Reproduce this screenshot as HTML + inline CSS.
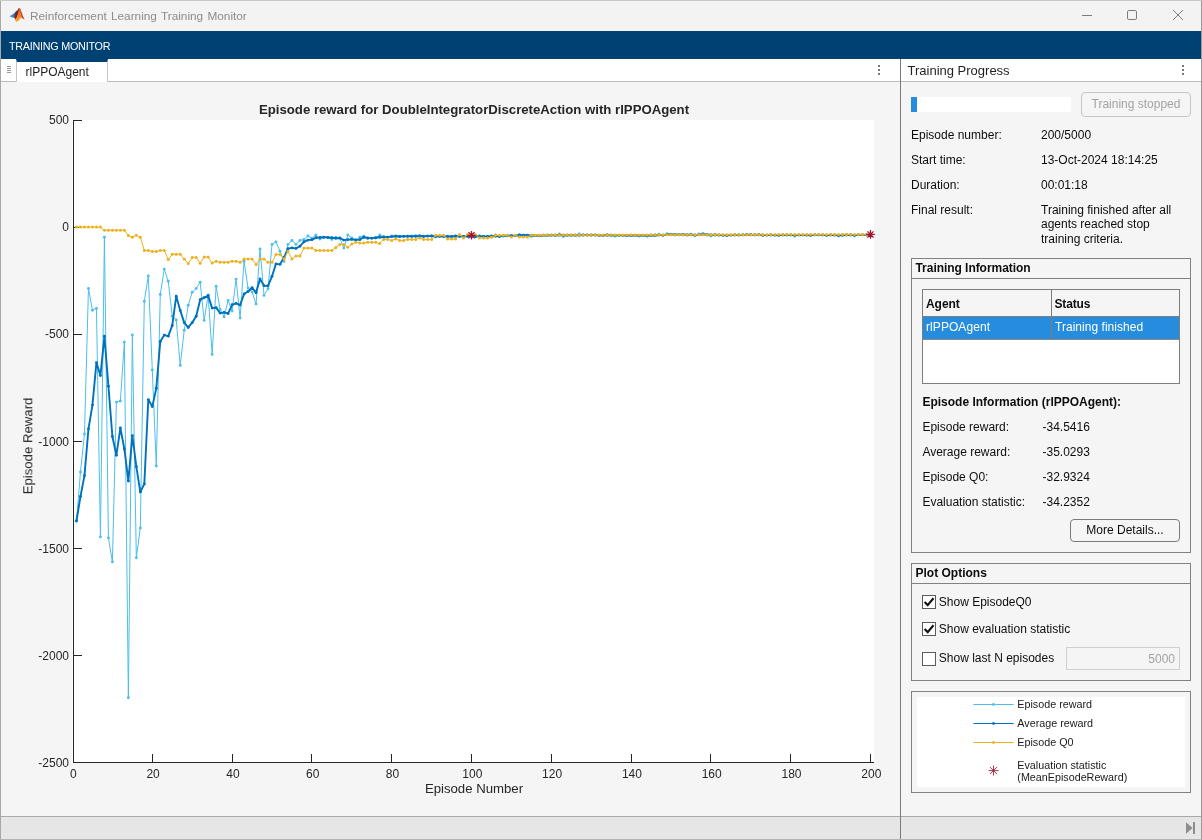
<!DOCTYPE html>
<html lang="en">
<head>
<meta charset="utf-8">
<title>Reinforcement Learning Training Monitor</title>
<style>
*{box-sizing:border-box;margin:0;padding:0}
html,body{width:1202px;height:840px;overflow:hidden;background:#f5f5f5}
body{position:relative;font-family:"Liberation Sans",Arial,sans-serif;font-size:12px;color:#0d0d0d}
.abs{position:absolute}
.t{position:absolute;white-space:nowrap;line-height:14px;height:14px}
#titlebar{left:0;top:0;width:1202px;height:31px;background:#f3f3f3}
#titletext{left:30px;top:8px;font-size:11.8px;word-spacing:1px;color:#8c8c8c;line-height:16px;height:16px}
#ribbon{left:1px;top:31px;width:1200px;height:28px;background:#004173}
#ribbontext{left:9px;top:39px;color:#fff;font-size:10.8px;line-height:14px;letter-spacing:-0.26px}
#tabrow{left:1px;top:59px;width:899px;height:23px;background:#fff;border-bottom:1px solid #bdbdbd}
#tab{left:16px;top:59px;width:92px;height:23px;background:#fff;border-left:1px solid #c4c4c4;border-right:1px solid #c4c4c4;border-top:3px solid #004173}
#rhead{left:901px;top:59px;width:300px;height:23px;background:#fff;border-bottom:1px solid #bdbdbd}
#vsep{left:900px;top:59px;width:1px;height:781px;background:#7a7a7a}
#lborder{left:0;top:1px;width:1px;height:839px;background:#a8a8a8}
#rborder{left:1201px;top:1px;width:1px;height:839px;background:#9b9b9b}
#tborder{left:0;top:0;width:1202px;height:1px;background:#c9c9c9}
#bborder{left:0;top:839px;width:1202px;height:1px;background:#b4b4b4}
.status{top:816px;height:23px;background:#e6e6e6;border-top:1px solid #a9a9a9}
.chart{position:absolute;left:0;top:82px}
.panel{position:absolute;left:911px;width:280px;border:1px solid #828282}
.panel .ph{position:absolute;left:0;top:0;width:278px;height:20px;border-bottom:1px solid #828282}
.b{font-weight:bold}
.btn{position:absolute;border:1px solid #7a7a7a;border-radius:4px;text-align:center}
.cb{position:absolute;left:922px;width:14px;height:14px;border:1px solid #5a5a5a;background:#fff}
.dots i{position:absolute;left:0;width:2px;height:2px;background:#4d4d4d;border-radius:1px}
</style>
</head>
<body>
<div id="root" style="position:absolute;left:0;top:0;width:1202px;height:840px;will-change:transform">
<div id="titlebar" class="abs"></div>
<div id="tborder" class="abs"></div>
<svg class="abs" style="left:9px;top:7px" width="16" height="16" viewBox="9 7 16 16">
  <defs>
    <linearGradient id="lgb" x1="0" y1="0" x2="1" y2="0"><stop offset="0" stop-color="#4ea8e6"/><stop offset="0.55" stop-color="#2f7fc8"/><stop offset="1" stop-color="#1c3f7a"/></linearGradient>
    <linearGradient id="lgm" x1="0" y1="1" x2="1" y2="0"><stop offset="0" stop-color="#9a2a1c"/><stop offset="1" stop-color="#5e1a22"/></linearGradient>
    <linearGradient id="lgo" x1="0" y1="0" x2="0" y2="1"><stop offset="0" stop-color="#d9541f"/><stop offset="0.6" stop-color="#ee8a2a"/><stop offset="1" stop-color="#f7b32b"/></linearGradient>
  </defs>
  <path d="M9.3 16.2L12.5 14.6L14.2 13.2L16.6 10.6L17.2 12L15.6 15.6L14.3 17.7L12.3 17.4Z" fill="url(#lgb)"/>
  <path d="M14.2 17.6L15 14.2L17 11L18.6 8.6L19.2 7.9L18.9 12L17.6 16L15.8 20Z" fill="url(#lgm)"/>
  <path d="M19.2 7.8C19.8 7.8 20.3 9 20.8 11L21.6 15L21.4 17.2L19.6 19.5L17.6 21.5L16.2 22L15.1 20.1L17 17L18.3 12Z" fill="url(#lgo)"/>
  <path d="M19.6 7.9C20.5 8.5 21.2 11 22 13.5C22.8 16 23.8 18.6 24.8 19.6C23.6 19.4 22.4 18.4 21.4 17.2C21.2 14 20.6 10.5 19.6 7.9Z" fill="#c7362b"/>
</svg>
<div id="titletext" class="t">Reinforcement Learning Training Monitor</div>
<svg class="abs" style="left:1070px;top:0" width="132" height="31" viewBox="0 0 132 31" fill="none" stroke="#7c7c7c" stroke-width="1">
  <path d="M12 15.5H22" />
  <rect x="57.5" y="10.5" width="9" height="9" rx="1.3"/>
  <path d="M103 10L113 20M113 10L103 20"/>
</svg>

<div id="ribbon" class="abs"></div>
<div id="ribbontext" class="t">TRAINING MONITOR</div>

<div id="tabrow" class="abs"></div>
<div id="tab" class="abs"></div>
<svg class="abs" style="left:6px;top:65px" width="7" height="9" viewBox="0 0 7 9" shape-rendering="crispEdges"><path d="M1 1.5H5M1 3.5H5M1 5.5H5M1 7.5H5" stroke="#959595" stroke-width="1"/></svg>
<div class="t" style="left:25.5px;top:65px;color:#1f1f1f">rlPPOAgent</div>
<div class="abs dots" style="left:878px;top:65px;width:2px;height:10px"><i style="top:0"></i><i style="top:4px"></i><i style="top:8px"></i></div>

<div id="rhead" class="abs"></div>
<div class="t" style="left:907.5px;top:63px;font-size:13px;line-height:15px;height:15px;color:#1f1f1f">Training Progress</div>
<div class="abs dots" style="left:1182px;top:65px;width:2px;height:10px"><i style="top:0"></i><i style="top:4px"></i><i style="top:8px"></i></div>

<svg class="chart" width="900" height="734" viewBox="0 82 900 734">
<rect x="72" y="120" width="802" height="643" fill="#fff"/>
<g stroke="#262626" stroke-width="1" fill="none" shape-rendering="crispEdges">
<path d="M73.5 120V763M73 762.5H874"/>
<path d="M74 120.5H81.5"/>
<path d="M74 227.5H81.5"/>
<path d="M74 334.5H81.5"/>
<path d="M74 441.5H81.5"/>
<path d="M74 548.5H81.5"/>
<path d="M74 655.5H81.5"/>
<path d="M74 762.5H81.5"/>
<path d="M73.5 762V754"/>
<path d="M152.5 762V754"/>
<path d="M232.5 762V754"/>
<path d="M311.5 762V754"/>
<path d="M391.5 762V754"/>
<path d="M471.5 762V754"/>
<path d="M551.5 762V754"/>
<path d="M631.5 762V754"/>
<path d="M710.5 762V754"/>
<path d="M790.5 762V754"/>
<path d="M870.5 762V754"/>
</g>
<polyline points="76.49,521.00 80.48,471.90 84.47,434.00 88.46,288.40 92.45,310.25 96.44,308.40 100.43,536.90 104.42,237.25 108.41,537.90 112.40,561.90 116.39,402.10 120.38,401.00 124.37,342.10 128.36,697.75 132.35,335.00 136.34,557.75 140.33,527.90 144.32,301.25 148.31,276.00 152.30,370.00 156.29,466.00 160.28,294.40 164.27,269.10 168.26,281.25 172.25,316.25 176.24,320.00 180.23,365.40 184.22,330.25 188.21,305.25 192.20,292.25 196.19,288.40 200.18,282.25 204.17,320.40 208.16,295.00 212.15,354.40 216.14,286.25 220.13,309.40 224.12,316.90 228.11,300.40 232.10,311.00 236.09,279.10 240.08,318.10 244.07,261.25 248.06,288.10 252.05,291.90 256.04,304.10 260.03,249.00 264.02,295.40 268.01,288.75 272.00,244.40 275.99,241.90 279.98,251.25 283.97,261.50 287.96,244.40 291.95,240.40 295.94,244.40 299.93,240.40 303.92,239.40 307.91,236.00 311.90,238.10 315.89,235.00 319.88,239.10 323.87,237.50 327.86,237.50 331.85,239.40 335.84,237.50 339.83,238.10 343.82,248.10 347.81,235.00 351.80,238.00 355.79,240.00 359.78,237.25 363.77,236.25 367.76,238.50 371.75,238.50 375.74,238.00 379.73,235.00 383.72,236.50 387.71,237.50 391.70,236.00 395.69,235.93 399.68,236.36 403.67,236.12 407.66,236.45 411.65,236.48 415.64,235.69 419.63,235.62 423.62,236.77 427.61,235.96 431.60,235.93 435.59,236.99 439.58,236.26 443.57,236.77 447.56,236.27 451.55,236.49 455.54,235.81 459.53,236.49 463.52,236.82 467.51,236.33 471.50,236.64 475.49,236.54 479.48,235.69 483.47,236.66 487.46,236.43 491.45,236.02 495.44,235.07 499.43,236.85 503.42,235.37 507.41,235.53 511.40,235.64 515.39,235.51 519.38,234.45 523.37,235.27 527.36,235.55 531.35,236.49 535.34,235.63 539.33,235.58 543.32,235.03 547.31,235.05 551.30,235.10 555.29,235.61 559.28,234.04 563.27,236.56 567.26,235.13 571.25,235.26 575.24,235.17 579.23,233.94 583.22,235.30 587.21,235.29 591.20,235.50 595.19,235.34 599.18,235.51 603.17,235.45 607.16,234.34 611.15,235.30 615.14,236.14 619.13,235.42 623.12,235.49 627.11,235.44 631.10,235.20 635.09,235.29 639.08,236.13 643.07,235.36 647.06,236.37 651.05,234.96 655.04,234.80 659.03,234.14 663.02,235.43 667.01,233.59 671.00,234.08 674.99,235.00 678.98,234.81 682.97,234.91 686.96,235.23 690.95,234.10 694.94,235.91 698.93,233.90 702.92,233.49 706.91,235.16 710.90,236.08 714.89,235.26 718.88,235.32 722.87,234.98 726.86,235.32 730.85,234.83 734.84,234.66 738.83,235.02 742.82,234.61 746.81,234.72 750.80,234.86 754.79,234.99 758.78,234.67 762.77,235.78 766.76,235.15 770.75,234.76 774.74,235.20 778.73,235.15 782.72,234.78 786.71,234.83 790.70,234.86 794.69,236.14 798.68,234.90 802.67,234.87 806.66,234.90 810.65,235.12 814.64,234.81 818.63,234.75 822.62,234.94 826.61,235.80 830.60,234.64 834.59,235.10 838.58,235.97 842.57,234.79 846.56,234.40 850.55,234.68 854.54,235.99 858.53,234.39 862.52,234.80 866.51,234.80 870.50,234.39" fill="none" stroke="#4DBEEE" stroke-width="1" stroke-linejoin="round"/>
<g fill="#4DBEEE"><circle cx="76.49" cy="521.00" r="1.45"/><circle cx="80.48" cy="471.90" r="1.45"/><circle cx="84.47" cy="434.00" r="1.45"/><circle cx="88.46" cy="288.40" r="1.45"/><circle cx="92.45" cy="310.25" r="1.45"/><circle cx="96.44" cy="308.40" r="1.45"/><circle cx="100.43" cy="536.90" r="1.45"/><circle cx="104.42" cy="237.25" r="1.45"/><circle cx="108.41" cy="537.90" r="1.45"/><circle cx="112.40" cy="561.90" r="1.45"/><circle cx="116.39" cy="402.10" r="1.45"/><circle cx="120.38" cy="401.00" r="1.45"/><circle cx="124.37" cy="342.10" r="1.45"/><circle cx="128.36" cy="697.75" r="1.45"/><circle cx="132.35" cy="335.00" r="1.45"/><circle cx="136.34" cy="557.75" r="1.45"/><circle cx="140.33" cy="527.90" r="1.45"/><circle cx="144.32" cy="301.25" r="1.45"/><circle cx="148.31" cy="276.00" r="1.45"/><circle cx="152.30" cy="370.00" r="1.45"/><circle cx="156.29" cy="466.00" r="1.45"/><circle cx="160.28" cy="294.40" r="1.45"/><circle cx="164.27" cy="269.10" r="1.45"/><circle cx="168.26" cy="281.25" r="1.45"/><circle cx="172.25" cy="316.25" r="1.45"/><circle cx="176.24" cy="320.00" r="1.45"/><circle cx="180.23" cy="365.40" r="1.45"/><circle cx="184.22" cy="330.25" r="1.45"/><circle cx="188.21" cy="305.25" r="1.45"/><circle cx="192.20" cy="292.25" r="1.45"/><circle cx="196.19" cy="288.40" r="1.45"/><circle cx="200.18" cy="282.25" r="1.45"/><circle cx="204.17" cy="320.40" r="1.45"/><circle cx="208.16" cy="295.00" r="1.45"/><circle cx="212.15" cy="354.40" r="1.45"/><circle cx="216.14" cy="286.25" r="1.45"/><circle cx="220.13" cy="309.40" r="1.45"/><circle cx="224.12" cy="316.90" r="1.45"/><circle cx="228.11" cy="300.40" r="1.45"/><circle cx="232.10" cy="311.00" r="1.45"/><circle cx="236.09" cy="279.10" r="1.45"/><circle cx="240.08" cy="318.10" r="1.45"/><circle cx="244.07" cy="261.25" r="1.45"/><circle cx="248.06" cy="288.10" r="1.45"/><circle cx="252.05" cy="291.90" r="1.45"/><circle cx="256.04" cy="304.10" r="1.45"/><circle cx="260.03" cy="249.00" r="1.45"/><circle cx="264.02" cy="295.40" r="1.45"/><circle cx="268.01" cy="288.75" r="1.45"/><circle cx="272.00" cy="244.40" r="1.45"/><circle cx="275.99" cy="241.90" r="1.45"/><circle cx="279.98" cy="251.25" r="1.45"/><circle cx="283.97" cy="261.50" r="1.45"/><circle cx="287.96" cy="244.40" r="1.45"/><circle cx="291.95" cy="240.40" r="1.45"/><circle cx="295.94" cy="244.40" r="1.45"/><circle cx="299.93" cy="240.40" r="1.45"/><circle cx="303.92" cy="239.40" r="1.45"/><circle cx="307.91" cy="236.00" r="1.45"/><circle cx="311.90" cy="238.10" r="1.45"/><circle cx="315.89" cy="235.00" r="1.45"/><circle cx="319.88" cy="239.10" r="1.45"/><circle cx="323.87" cy="237.50" r="1.45"/><circle cx="327.86" cy="237.50" r="1.45"/><circle cx="331.85" cy="239.40" r="1.45"/><circle cx="335.84" cy="237.50" r="1.45"/><circle cx="339.83" cy="238.10" r="1.45"/><circle cx="343.82" cy="248.10" r="1.45"/><circle cx="347.81" cy="235.00" r="1.45"/><circle cx="351.80" cy="238.00" r="1.45"/><circle cx="355.79" cy="240.00" r="1.45"/><circle cx="359.78" cy="237.25" r="1.45"/><circle cx="363.77" cy="236.25" r="1.45"/><circle cx="367.76" cy="238.50" r="1.45"/><circle cx="371.75" cy="238.50" r="1.45"/><circle cx="375.74" cy="238.00" r="1.45"/><circle cx="379.73" cy="235.00" r="1.45"/><circle cx="383.72" cy="236.50" r="1.45"/><circle cx="387.71" cy="237.50" r="1.45"/><circle cx="391.70" cy="236.00" r="1.45"/><circle cx="395.69" cy="235.93" r="1.45"/><circle cx="399.68" cy="236.36" r="1.45"/><circle cx="403.67" cy="236.12" r="1.45"/><circle cx="407.66" cy="236.45" r="1.45"/><circle cx="411.65" cy="236.48" r="1.45"/><circle cx="415.64" cy="235.69" r="1.45"/><circle cx="419.63" cy="235.62" r="1.45"/><circle cx="423.62" cy="236.77" r="1.45"/><circle cx="427.61" cy="235.96" r="1.45"/><circle cx="431.60" cy="235.93" r="1.45"/><circle cx="435.59" cy="236.99" r="1.45"/><circle cx="439.58" cy="236.26" r="1.45"/><circle cx="443.57" cy="236.77" r="1.45"/><circle cx="447.56" cy="236.27" r="1.45"/><circle cx="451.55" cy="236.49" r="1.45"/><circle cx="455.54" cy="235.81" r="1.45"/><circle cx="459.53" cy="236.49" r="1.45"/><circle cx="463.52" cy="236.82" r="1.45"/><circle cx="467.51" cy="236.33" r="1.45"/><circle cx="471.50" cy="236.64" r="1.45"/><circle cx="475.49" cy="236.54" r="1.45"/><circle cx="479.48" cy="235.69" r="1.45"/><circle cx="483.47" cy="236.66" r="1.45"/><circle cx="487.46" cy="236.43" r="1.45"/><circle cx="491.45" cy="236.02" r="1.45"/><circle cx="495.44" cy="235.07" r="1.45"/><circle cx="499.43" cy="236.85" r="1.45"/><circle cx="503.42" cy="235.37" r="1.45"/><circle cx="507.41" cy="235.53" r="1.45"/><circle cx="511.40" cy="235.64" r="1.45"/><circle cx="515.39" cy="235.51" r="1.45"/><circle cx="519.38" cy="234.45" r="1.45"/><circle cx="523.37" cy="235.27" r="1.45"/><circle cx="527.36" cy="235.55" r="1.45"/><circle cx="531.35" cy="236.49" r="1.45"/><circle cx="535.34" cy="235.63" r="1.45"/><circle cx="539.33" cy="235.58" r="1.45"/><circle cx="543.32" cy="235.03" r="1.45"/><circle cx="547.31" cy="235.05" r="1.45"/><circle cx="551.30" cy="235.10" r="1.45"/><circle cx="555.29" cy="235.61" r="1.45"/><circle cx="559.28" cy="234.04" r="1.45"/><circle cx="563.27" cy="236.56" r="1.45"/><circle cx="567.26" cy="235.13" r="1.45"/><circle cx="571.25" cy="235.26" r="1.45"/><circle cx="575.24" cy="235.17" r="1.45"/><circle cx="579.23" cy="233.94" r="1.45"/><circle cx="583.22" cy="235.30" r="1.45"/><circle cx="587.21" cy="235.29" r="1.45"/><circle cx="591.20" cy="235.50" r="1.45"/><circle cx="595.19" cy="235.34" r="1.45"/><circle cx="599.18" cy="235.51" r="1.45"/><circle cx="603.17" cy="235.45" r="1.45"/><circle cx="607.16" cy="234.34" r="1.45"/><circle cx="611.15" cy="235.30" r="1.45"/><circle cx="615.14" cy="236.14" r="1.45"/><circle cx="619.13" cy="235.42" r="1.45"/><circle cx="623.12" cy="235.49" r="1.45"/><circle cx="627.11" cy="235.44" r="1.45"/><circle cx="631.10" cy="235.20" r="1.45"/><circle cx="635.09" cy="235.29" r="1.45"/><circle cx="639.08" cy="236.13" r="1.45"/><circle cx="643.07" cy="235.36" r="1.45"/><circle cx="647.06" cy="236.37" r="1.45"/><circle cx="651.05" cy="234.96" r="1.45"/><circle cx="655.04" cy="234.80" r="1.45"/><circle cx="659.03" cy="234.14" r="1.45"/><circle cx="663.02" cy="235.43" r="1.45"/><circle cx="667.01" cy="233.59" r="1.45"/><circle cx="671.00" cy="234.08" r="1.45"/><circle cx="674.99" cy="235.00" r="1.45"/><circle cx="678.98" cy="234.81" r="1.45"/><circle cx="682.97" cy="234.91" r="1.45"/><circle cx="686.96" cy="235.23" r="1.45"/><circle cx="690.95" cy="234.10" r="1.45"/><circle cx="694.94" cy="235.91" r="1.45"/><circle cx="698.93" cy="233.90" r="1.45"/><circle cx="702.92" cy="233.49" r="1.45"/><circle cx="706.91" cy="235.16" r="1.45"/><circle cx="710.90" cy="236.08" r="1.45"/><circle cx="714.89" cy="235.26" r="1.45"/><circle cx="718.88" cy="235.32" r="1.45"/><circle cx="722.87" cy="234.98" r="1.45"/><circle cx="726.86" cy="235.32" r="1.45"/><circle cx="730.85" cy="234.83" r="1.45"/><circle cx="734.84" cy="234.66" r="1.45"/><circle cx="738.83" cy="235.02" r="1.45"/><circle cx="742.82" cy="234.61" r="1.45"/><circle cx="746.81" cy="234.72" r="1.45"/><circle cx="750.80" cy="234.86" r="1.45"/><circle cx="754.79" cy="234.99" r="1.45"/><circle cx="758.78" cy="234.67" r="1.45"/><circle cx="762.77" cy="235.78" r="1.45"/><circle cx="766.76" cy="235.15" r="1.45"/><circle cx="770.75" cy="234.76" r="1.45"/><circle cx="774.74" cy="235.20" r="1.45"/><circle cx="778.73" cy="235.15" r="1.45"/><circle cx="782.72" cy="234.78" r="1.45"/><circle cx="786.71" cy="234.83" r="1.45"/><circle cx="790.70" cy="234.86" r="1.45"/><circle cx="794.69" cy="236.14" r="1.45"/><circle cx="798.68" cy="234.90" r="1.45"/><circle cx="802.67" cy="234.87" r="1.45"/><circle cx="806.66" cy="234.90" r="1.45"/><circle cx="810.65" cy="235.12" r="1.45"/><circle cx="814.64" cy="234.81" r="1.45"/><circle cx="818.63" cy="234.75" r="1.45"/><circle cx="822.62" cy="234.94" r="1.45"/><circle cx="826.61" cy="235.80" r="1.45"/><circle cx="830.60" cy="234.64" r="1.45"/><circle cx="834.59" cy="235.10" r="1.45"/><circle cx="838.58" cy="235.97" r="1.45"/><circle cx="842.57" cy="234.79" r="1.45"/><circle cx="846.56" cy="234.40" r="1.45"/><circle cx="850.55" cy="234.68" r="1.45"/><circle cx="854.54" cy="235.99" r="1.45"/><circle cx="858.53" cy="234.39" r="1.45"/><circle cx="862.52" cy="234.80" r="1.45"/><circle cx="866.51" cy="234.80" r="1.45"/><circle cx="870.50" cy="234.39" r="1.45"/></g>

<polyline points="76.49,521.00 80.48,496.45 84.47,475.63 88.46,428.83 92.45,405.11 96.44,362.59 100.43,375.59 104.42,336.24 108.41,386.14 112.40,436.47 116.39,455.21 120.38,428.03 124.37,449.00 128.36,480.97 132.35,435.59 136.34,466.72 140.33,492.10 144.32,483.93 148.31,399.58 152.30,406.58 156.29,388.23 160.28,341.53 164.27,335.10 168.26,336.15 172.25,325.40 176.24,296.20 180.23,310.40 184.22,322.63 188.21,327.43 192.20,322.63 196.19,316.31 200.18,299.68 204.17,297.71 208.16,295.66 212.15,308.09 216.14,307.66 220.13,313.09 224.12,312.39 228.11,313.47 232.10,304.79 236.09,303.36 240.08,305.10 244.07,293.97 248.06,291.51 252.05,287.69 256.04,292.69 260.03,278.87 264.02,285.70 268.01,285.83 272.00,276.33 275.99,263.89 279.98,264.34 283.97,257.56 287.96,248.69 291.95,247.89 295.94,248.39 299.93,246.22 303.92,241.80 307.91,240.12 311.90,239.66 315.89,237.78 319.88,237.52 323.87,237.14 327.86,237.44 331.85,237.70 335.84,238.20 339.83,238.00 343.82,240.12 347.81,239.62 351.80,239.34 355.79,239.84 359.78,239.67 363.77,237.30 367.76,238.00 371.75,238.10 375.74,237.70 379.73,237.25 383.72,237.30 387.71,237.10 391.70,236.60 395.69,236.19 399.68,236.46 403.67,236.38 407.66,236.17 411.65,236.27 415.64,236.22 419.63,236.07 423.62,236.20 427.61,236.10 431.60,235.99 435.59,236.26 439.58,236.38 443.57,236.38 447.56,236.44 451.55,236.56 455.54,236.32 459.53,236.37 463.52,236.38 467.51,236.39 471.50,236.42 475.49,236.56 479.48,236.40 483.47,236.37 487.46,236.39 491.45,236.27 495.44,235.97 499.43,236.21 503.42,235.95 507.41,235.77 511.40,235.69 515.39,235.78 519.38,235.30 523.37,235.28 527.36,235.28 531.35,235.46 535.34,235.48 539.33,235.71 543.32,235.66 547.31,235.56 551.30,235.28 555.29,235.27 559.28,234.97 563.27,235.27 567.26,235.29 571.25,235.32 575.24,235.23 579.23,235.21 583.22,234.96 587.21,234.99 591.20,235.04 595.19,235.07 599.18,235.39 603.17,235.42 607.16,235.23 611.15,235.19 615.14,235.35 619.13,235.33 623.12,235.34 627.11,235.56 631.10,235.54 635.09,235.37 639.08,235.51 643.07,235.48 647.06,235.67 651.05,235.62 655.04,235.52 659.03,235.12 663.02,235.14 667.01,234.58 671.00,234.41 674.99,234.45 678.98,234.58 682.97,234.48 686.96,234.81 690.95,234.81 694.94,234.99 698.93,234.81 702.92,234.53 706.91,234.51 710.90,234.91 714.89,234.78 718.88,235.06 722.87,235.36 726.86,235.39 730.85,235.14 734.84,235.02 738.83,234.96 742.82,234.89 746.81,234.77 750.80,234.77 754.79,234.84 758.78,234.77 762.77,235.00 766.76,235.09 770.75,235.07 774.74,235.11 778.73,235.21 782.72,235.01 786.71,234.94 790.70,234.96 794.69,235.15 798.68,235.10 802.67,235.12 806.66,235.14 810.65,235.19 814.64,234.92 818.63,234.89 822.62,234.90 826.61,235.08 830.60,234.99 834.59,235.05 838.58,235.29 842.57,235.26 846.56,234.98 850.55,234.99 854.54,235.17 858.53,234.85 862.52,234.85 866.51,234.93 870.50,234.87" fill="none" stroke="#0072BD" stroke-width="1.9" stroke-linejoin="round"/>
<g fill="#0072BD"><circle cx="76.49" cy="521.00" r="1.45"/><circle cx="80.48" cy="496.45" r="1.45"/><circle cx="84.47" cy="475.63" r="1.45"/><circle cx="88.46" cy="428.83" r="1.45"/><circle cx="92.45" cy="405.11" r="1.45"/><circle cx="96.44" cy="362.59" r="1.45"/><circle cx="100.43" cy="375.59" r="1.45"/><circle cx="104.42" cy="336.24" r="1.45"/><circle cx="108.41" cy="386.14" r="1.45"/><circle cx="112.40" cy="436.47" r="1.45"/><circle cx="116.39" cy="455.21" r="1.45"/><circle cx="120.38" cy="428.03" r="1.45"/><circle cx="124.37" cy="449.00" r="1.45"/><circle cx="128.36" cy="480.97" r="1.45"/><circle cx="132.35" cy="435.59" r="1.45"/><circle cx="136.34" cy="466.72" r="1.45"/><circle cx="140.33" cy="492.10" r="1.45"/><circle cx="144.32" cy="483.93" r="1.45"/><circle cx="148.31" cy="399.58" r="1.45"/><circle cx="152.30" cy="406.58" r="1.45"/><circle cx="156.29" cy="388.23" r="1.45"/><circle cx="160.28" cy="341.53" r="1.45"/><circle cx="164.27" cy="335.10" r="1.45"/><circle cx="168.26" cy="336.15" r="1.45"/><circle cx="172.25" cy="325.40" r="1.45"/><circle cx="176.24" cy="296.20" r="1.45"/><circle cx="180.23" cy="310.40" r="1.45"/><circle cx="184.22" cy="322.63" r="1.45"/><circle cx="188.21" cy="327.43" r="1.45"/><circle cx="192.20" cy="322.63" r="1.45"/><circle cx="196.19" cy="316.31" r="1.45"/><circle cx="200.18" cy="299.68" r="1.45"/><circle cx="204.17" cy="297.71" r="1.45"/><circle cx="208.16" cy="295.66" r="1.45"/><circle cx="212.15" cy="308.09" r="1.45"/><circle cx="216.14" cy="307.66" r="1.45"/><circle cx="220.13" cy="313.09" r="1.45"/><circle cx="224.12" cy="312.39" r="1.45"/><circle cx="228.11" cy="313.47" r="1.45"/><circle cx="232.10" cy="304.79" r="1.45"/><circle cx="236.09" cy="303.36" r="1.45"/><circle cx="240.08" cy="305.10" r="1.45"/><circle cx="244.07" cy="293.97" r="1.45"/><circle cx="248.06" cy="291.51" r="1.45"/><circle cx="252.05" cy="287.69" r="1.45"/><circle cx="256.04" cy="292.69" r="1.45"/><circle cx="260.03" cy="278.87" r="1.45"/><circle cx="264.02" cy="285.70" r="1.45"/><circle cx="268.01" cy="285.83" r="1.45"/><circle cx="272.00" cy="276.33" r="1.45"/><circle cx="275.99" cy="263.89" r="1.45"/><circle cx="279.98" cy="264.34" r="1.45"/><circle cx="283.97" cy="257.56" r="1.45"/><circle cx="287.96" cy="248.69" r="1.45"/><circle cx="291.95" cy="247.89" r="1.45"/><circle cx="295.94" cy="248.39" r="1.45"/><circle cx="299.93" cy="246.22" r="1.45"/><circle cx="303.92" cy="241.80" r="1.45"/><circle cx="307.91" cy="240.12" r="1.45"/><circle cx="311.90" cy="239.66" r="1.45"/><circle cx="315.89" cy="237.78" r="1.45"/><circle cx="319.88" cy="237.52" r="1.45"/><circle cx="323.87" cy="237.14" r="1.45"/><circle cx="327.86" cy="237.44" r="1.45"/><circle cx="331.85" cy="237.70" r="1.45"/><circle cx="335.84" cy="238.20" r="1.45"/><circle cx="339.83" cy="238.00" r="1.45"/><circle cx="343.82" cy="240.12" r="1.45"/><circle cx="347.81" cy="239.62" r="1.45"/><circle cx="351.80" cy="239.34" r="1.45"/><circle cx="355.79" cy="239.84" r="1.45"/><circle cx="359.78" cy="239.67" r="1.45"/><circle cx="363.77" cy="237.30" r="1.45"/><circle cx="367.76" cy="238.00" r="1.45"/><circle cx="371.75" cy="238.10" r="1.45"/><circle cx="375.74" cy="237.70" r="1.45"/><circle cx="379.73" cy="237.25" r="1.45"/><circle cx="383.72" cy="237.30" r="1.45"/><circle cx="387.71" cy="237.10" r="1.45"/><circle cx="391.70" cy="236.60" r="1.45"/><circle cx="395.69" cy="236.19" r="1.45"/><circle cx="399.68" cy="236.46" r="1.45"/><circle cx="403.67" cy="236.38" r="1.45"/><circle cx="407.66" cy="236.17" r="1.45"/><circle cx="411.65" cy="236.27" r="1.45"/><circle cx="415.64" cy="236.22" r="1.45"/><circle cx="419.63" cy="236.07" r="1.45"/><circle cx="423.62" cy="236.20" r="1.45"/><circle cx="427.61" cy="236.10" r="1.45"/><circle cx="431.60" cy="235.99" r="1.45"/><circle cx="435.59" cy="236.26" r="1.45"/><circle cx="439.58" cy="236.38" r="1.45"/><circle cx="443.57" cy="236.38" r="1.45"/><circle cx="447.56" cy="236.44" r="1.45"/><circle cx="451.55" cy="236.56" r="1.45"/><circle cx="455.54" cy="236.32" r="1.45"/><circle cx="459.53" cy="236.37" r="1.45"/><circle cx="463.52" cy="236.38" r="1.45"/><circle cx="467.51" cy="236.39" r="1.45"/><circle cx="471.50" cy="236.42" r="1.45"/><circle cx="475.49" cy="236.56" r="1.45"/><circle cx="479.48" cy="236.40" r="1.45"/><circle cx="483.47" cy="236.37" r="1.45"/><circle cx="487.46" cy="236.39" r="1.45"/><circle cx="491.45" cy="236.27" r="1.45"/><circle cx="495.44" cy="235.97" r="1.45"/><circle cx="499.43" cy="236.21" r="1.45"/><circle cx="503.42" cy="235.95" r="1.45"/><circle cx="507.41" cy="235.77" r="1.45"/><circle cx="511.40" cy="235.69" r="1.45"/><circle cx="515.39" cy="235.78" r="1.45"/><circle cx="519.38" cy="235.30" r="1.45"/><circle cx="523.37" cy="235.28" r="1.45"/><circle cx="527.36" cy="235.28" r="1.45"/><circle cx="531.35" cy="235.46" r="1.45"/><circle cx="535.34" cy="235.48" r="1.45"/><circle cx="539.33" cy="235.71" r="1.45"/><circle cx="543.32" cy="235.66" r="1.45"/><circle cx="547.31" cy="235.56" r="1.45"/><circle cx="551.30" cy="235.28" r="1.45"/><circle cx="555.29" cy="235.27" r="1.45"/><circle cx="559.28" cy="234.97" r="1.45"/><circle cx="563.27" cy="235.27" r="1.45"/><circle cx="567.26" cy="235.29" r="1.45"/><circle cx="571.25" cy="235.32" r="1.45"/><circle cx="575.24" cy="235.23" r="1.45"/><circle cx="579.23" cy="235.21" r="1.45"/><circle cx="583.22" cy="234.96" r="1.45"/><circle cx="587.21" cy="234.99" r="1.45"/><circle cx="591.20" cy="235.04" r="1.45"/><circle cx="595.19" cy="235.07" r="1.45"/><circle cx="599.18" cy="235.39" r="1.45"/><circle cx="603.17" cy="235.42" r="1.45"/><circle cx="607.16" cy="235.23" r="1.45"/><circle cx="611.15" cy="235.19" r="1.45"/><circle cx="615.14" cy="235.35" r="1.45"/><circle cx="619.13" cy="235.33" r="1.45"/><circle cx="623.12" cy="235.34" r="1.45"/><circle cx="627.11" cy="235.56" r="1.45"/><circle cx="631.10" cy="235.54" r="1.45"/><circle cx="635.09" cy="235.37" r="1.45"/><circle cx="639.08" cy="235.51" r="1.45"/><circle cx="643.07" cy="235.48" r="1.45"/><circle cx="647.06" cy="235.67" r="1.45"/><circle cx="651.05" cy="235.62" r="1.45"/><circle cx="655.04" cy="235.52" r="1.45"/><circle cx="659.03" cy="235.12" r="1.45"/><circle cx="663.02" cy="235.14" r="1.45"/><circle cx="667.01" cy="234.58" r="1.45"/><circle cx="671.00" cy="234.41" r="1.45"/><circle cx="674.99" cy="234.45" r="1.45"/><circle cx="678.98" cy="234.58" r="1.45"/><circle cx="682.97" cy="234.48" r="1.45"/><circle cx="686.96" cy="234.81" r="1.45"/><circle cx="690.95" cy="234.81" r="1.45"/><circle cx="694.94" cy="234.99" r="1.45"/><circle cx="698.93" cy="234.81" r="1.45"/><circle cx="702.92" cy="234.53" r="1.45"/><circle cx="706.91" cy="234.51" r="1.45"/><circle cx="710.90" cy="234.91" r="1.45"/><circle cx="714.89" cy="234.78" r="1.45"/><circle cx="718.88" cy="235.06" r="1.45"/><circle cx="722.87" cy="235.36" r="1.45"/><circle cx="726.86" cy="235.39" r="1.45"/><circle cx="730.85" cy="235.14" r="1.45"/><circle cx="734.84" cy="235.02" r="1.45"/><circle cx="738.83" cy="234.96" r="1.45"/><circle cx="742.82" cy="234.89" r="1.45"/><circle cx="746.81" cy="234.77" r="1.45"/><circle cx="750.80" cy="234.77" r="1.45"/><circle cx="754.79" cy="234.84" r="1.45"/><circle cx="758.78" cy="234.77" r="1.45"/><circle cx="762.77" cy="235.00" r="1.45"/><circle cx="766.76" cy="235.09" r="1.45"/><circle cx="770.75" cy="235.07" r="1.45"/><circle cx="774.74" cy="235.11" r="1.45"/><circle cx="778.73" cy="235.21" r="1.45"/><circle cx="782.72" cy="235.01" r="1.45"/><circle cx="786.71" cy="234.94" r="1.45"/><circle cx="790.70" cy="234.96" r="1.45"/><circle cx="794.69" cy="235.15" r="1.45"/><circle cx="798.68" cy="235.10" r="1.45"/><circle cx="802.67" cy="235.12" r="1.45"/><circle cx="806.66" cy="235.14" r="1.45"/><circle cx="810.65" cy="235.19" r="1.45"/><circle cx="814.64" cy="234.92" r="1.45"/><circle cx="818.63" cy="234.89" r="1.45"/><circle cx="822.62" cy="234.90" r="1.45"/><circle cx="826.61" cy="235.08" r="1.45"/><circle cx="830.60" cy="234.99" r="1.45"/><circle cx="834.59" cy="235.05" r="1.45"/><circle cx="838.58" cy="235.29" r="1.45"/><circle cx="842.57" cy="235.26" r="1.45"/><circle cx="846.56" cy="234.98" r="1.45"/><circle cx="850.55" cy="234.99" r="1.45"/><circle cx="854.54" cy="235.17" r="1.45"/><circle cx="858.53" cy="234.85" r="1.45"/><circle cx="862.52" cy="234.85" r="1.45"/><circle cx="866.51" cy="234.93" r="1.45"/><circle cx="870.50" cy="234.87" r="1.45"/></g>

<polyline points="76.49,227.10 80.48,227.10 84.47,227.10 88.46,227.10 92.45,227.10 96.44,227.10 100.43,227.10 104.42,230.25 108.41,230.25 112.40,230.25 116.39,230.25 120.38,230.25 124.37,230.25 128.36,235.40 132.35,237.25 136.34,235.25 140.33,237.25 144.32,250.40 148.31,250.40 152.30,251.40 156.29,251.40 160.28,250.40 164.27,250.40 168.26,259.50 172.25,254.25 176.24,254.25 180.23,254.25 184.22,259.00 188.21,263.50 192.20,257.40 196.19,257.40 200.18,263.30 204.17,257.10 208.16,257.10 212.15,263.10 216.14,261.25 220.13,262.25 224.12,262.25 228.11,262.25 232.10,261.25 236.09,261.25 240.08,262.25 244.07,259.10 248.06,259.10 252.05,259.10 256.04,264.40 260.03,259.10 264.02,259.10 268.01,262.25 272.00,262.25 275.99,254.40 279.98,254.40 283.97,259.10 287.96,251.25 291.95,259.10 295.94,256.00 299.93,256.00 303.92,248.10 307.91,248.10 311.90,248.10 315.89,250.40 319.88,250.40 323.87,250.40 327.86,250.40 331.85,250.40 335.84,247.50 339.83,244.40 343.82,244.40 347.81,247.25 351.80,244.10 355.79,242.25 359.78,243.10 363.77,243.10 367.76,242.25 371.75,242.25 375.74,242.25 379.73,243.50 383.72,239.40 387.71,239.40 391.70,240.40 395.69,239.10 399.68,240.40 403.67,240.40 407.66,239.40 411.65,239.40 415.64,239.40 419.63,238.10 423.62,239.40 427.61,239.40 431.60,239.40 435.59,235.25 439.58,235.25 443.57,235.25 447.56,239.10 451.55,239.10 455.54,239.10 459.53,234.40 463.52,237.90 467.51,234.40 471.50,235.50 475.49,234.40 479.48,237.90 483.47,238.10 487.46,238.10 491.45,237.25 495.44,235.25 499.43,235.24 503.42,235.23 507.41,235.22 511.40,236.90 515.39,235.20 519.38,236.90 523.37,236.90 527.36,236.90 531.35,235.17 535.34,235.16 539.33,235.15 543.32,235.14 547.31,235.13 551.30,235.12 555.29,235.11 559.28,235.11 563.27,235.10 567.26,235.09 571.25,235.08 575.24,235.07 579.23,235.06 583.22,235.05 587.21,235.04 591.20,235.03 595.19,235.02 599.18,235.01 603.17,235.01 607.16,235.00 611.15,234.99 615.14,234.98 619.13,234.97 623.12,234.96 627.11,234.95 631.10,234.94 635.09,234.93 639.08,234.92 643.07,234.92 647.06,234.91 651.05,234.90 655.04,234.89 659.03,234.88 663.02,234.87 667.01,234.86 671.00,234.85 674.99,234.84 678.98,234.83 682.97,234.82 686.96,234.82 690.95,234.81 694.94,234.80 698.93,234.79 702.92,234.78 706.91,234.77 710.90,234.76 714.89,234.75 718.88,234.74 722.87,234.73 726.86,234.73 730.85,234.72 734.84,234.71 738.83,234.70 742.82,234.69 746.81,234.68 750.80,234.67 754.79,234.66 758.78,234.65 762.77,234.64 766.76,234.64 770.75,234.63 774.74,234.62 778.73,234.61 782.72,234.60 786.71,234.59 790.70,234.58 794.69,234.57 798.68,234.56 802.67,234.55 806.66,234.54 810.65,234.54 814.64,234.53 818.63,234.52 822.62,234.51 826.61,234.50 830.60,234.49 834.59,234.48 838.58,234.47 842.57,234.46 846.56,234.45 850.55,234.45 854.54,234.44 858.53,234.43 862.52,234.42 866.51,234.41 870.50,234.40" fill="none" stroke="#EDB120" stroke-width="1" stroke-linejoin="round"/>
<g fill="#EDB120"><circle cx="76.49" cy="227.10" r="1.5"/><circle cx="80.48" cy="227.10" r="1.5"/><circle cx="84.47" cy="227.10" r="1.5"/><circle cx="88.46" cy="227.10" r="1.5"/><circle cx="92.45" cy="227.10" r="1.5"/><circle cx="96.44" cy="227.10" r="1.5"/><circle cx="100.43" cy="227.10" r="1.5"/><circle cx="104.42" cy="230.25" r="1.5"/><circle cx="108.41" cy="230.25" r="1.5"/><circle cx="112.40" cy="230.25" r="1.5"/><circle cx="116.39" cy="230.25" r="1.5"/><circle cx="120.38" cy="230.25" r="1.5"/><circle cx="124.37" cy="230.25" r="1.5"/><circle cx="128.36" cy="235.40" r="1.5"/><circle cx="132.35" cy="237.25" r="1.5"/><circle cx="136.34" cy="235.25" r="1.5"/><circle cx="140.33" cy="237.25" r="1.5"/><circle cx="144.32" cy="250.40" r="1.5"/><circle cx="148.31" cy="250.40" r="1.5"/><circle cx="152.30" cy="251.40" r="1.5"/><circle cx="156.29" cy="251.40" r="1.5"/><circle cx="160.28" cy="250.40" r="1.5"/><circle cx="164.27" cy="250.40" r="1.5"/><circle cx="168.26" cy="259.50" r="1.5"/><circle cx="172.25" cy="254.25" r="1.5"/><circle cx="176.24" cy="254.25" r="1.5"/><circle cx="180.23" cy="254.25" r="1.5"/><circle cx="184.22" cy="259.00" r="1.5"/><circle cx="188.21" cy="263.50" r="1.5"/><circle cx="192.20" cy="257.40" r="1.5"/><circle cx="196.19" cy="257.40" r="1.5"/><circle cx="200.18" cy="263.30" r="1.5"/><circle cx="204.17" cy="257.10" r="1.5"/><circle cx="208.16" cy="257.10" r="1.5"/><circle cx="212.15" cy="263.10" r="1.5"/><circle cx="216.14" cy="261.25" r="1.5"/><circle cx="220.13" cy="262.25" r="1.5"/><circle cx="224.12" cy="262.25" r="1.5"/><circle cx="228.11" cy="262.25" r="1.5"/><circle cx="232.10" cy="261.25" r="1.5"/><circle cx="236.09" cy="261.25" r="1.5"/><circle cx="240.08" cy="262.25" r="1.5"/><circle cx="244.07" cy="259.10" r="1.5"/><circle cx="248.06" cy="259.10" r="1.5"/><circle cx="252.05" cy="259.10" r="1.5"/><circle cx="256.04" cy="264.40" r="1.5"/><circle cx="260.03" cy="259.10" r="1.5"/><circle cx="264.02" cy="259.10" r="1.5"/><circle cx="268.01" cy="262.25" r="1.5"/><circle cx="272.00" cy="262.25" r="1.5"/><circle cx="275.99" cy="254.40" r="1.5"/><circle cx="279.98" cy="254.40" r="1.5"/><circle cx="283.97" cy="259.10" r="1.5"/><circle cx="287.96" cy="251.25" r="1.5"/><circle cx="291.95" cy="259.10" r="1.5"/><circle cx="295.94" cy="256.00" r="1.5"/><circle cx="299.93" cy="256.00" r="1.5"/><circle cx="303.92" cy="248.10" r="1.5"/><circle cx="307.91" cy="248.10" r="1.5"/><circle cx="311.90" cy="248.10" r="1.5"/><circle cx="315.89" cy="250.40" r="1.5"/><circle cx="319.88" cy="250.40" r="1.5"/><circle cx="323.87" cy="250.40" r="1.5"/><circle cx="327.86" cy="250.40" r="1.5"/><circle cx="331.85" cy="250.40" r="1.5"/><circle cx="335.84" cy="247.50" r="1.5"/><circle cx="339.83" cy="244.40" r="1.5"/><circle cx="343.82" cy="244.40" r="1.5"/><circle cx="347.81" cy="247.25" r="1.5"/><circle cx="351.80" cy="244.10" r="1.5"/><circle cx="355.79" cy="242.25" r="1.5"/><circle cx="359.78" cy="243.10" r="1.5"/><circle cx="363.77" cy="243.10" r="1.5"/><circle cx="367.76" cy="242.25" r="1.5"/><circle cx="371.75" cy="242.25" r="1.5"/><circle cx="375.74" cy="242.25" r="1.5"/><circle cx="379.73" cy="243.50" r="1.5"/><circle cx="383.72" cy="239.40" r="1.5"/><circle cx="387.71" cy="239.40" r="1.5"/><circle cx="391.70" cy="240.40" r="1.5"/><circle cx="395.69" cy="239.10" r="1.5"/><circle cx="399.68" cy="240.40" r="1.5"/><circle cx="403.67" cy="240.40" r="1.5"/><circle cx="407.66" cy="239.40" r="1.5"/><circle cx="411.65" cy="239.40" r="1.5"/><circle cx="415.64" cy="239.40" r="1.5"/><circle cx="419.63" cy="238.10" r="1.5"/><circle cx="423.62" cy="239.40" r="1.5"/><circle cx="427.61" cy="239.40" r="1.5"/><circle cx="431.60" cy="239.40" r="1.5"/><circle cx="435.59" cy="235.25" r="1.5"/><circle cx="439.58" cy="235.25" r="1.5"/><circle cx="443.57" cy="235.25" r="1.5"/><circle cx="447.56" cy="239.10" r="1.5"/><circle cx="451.55" cy="239.10" r="1.5"/><circle cx="455.54" cy="239.10" r="1.5"/><circle cx="459.53" cy="234.40" r="1.5"/><circle cx="463.52" cy="237.90" r="1.5"/><circle cx="467.51" cy="234.40" r="1.5"/><circle cx="471.50" cy="235.50" r="1.5"/><circle cx="475.49" cy="234.40" r="1.5"/><circle cx="479.48" cy="237.90" r="1.5"/><circle cx="483.47" cy="238.10" r="1.5"/><circle cx="487.46" cy="238.10" r="1.5"/><circle cx="491.45" cy="237.25" r="1.5"/><circle cx="495.44" cy="235.25" r="1.5"/><circle cx="499.43" cy="235.24" r="1.5"/><circle cx="503.42" cy="235.23" r="1.5"/><circle cx="507.41" cy="235.22" r="1.5"/><circle cx="511.40" cy="236.90" r="1.5"/><circle cx="515.39" cy="235.20" r="1.5"/><circle cx="519.38" cy="236.90" r="1.5"/><circle cx="523.37" cy="236.90" r="1.5"/><circle cx="527.36" cy="236.90" r="1.5"/><circle cx="531.35" cy="235.17" r="1.5"/><circle cx="535.34" cy="235.16" r="1.5"/><circle cx="539.33" cy="235.15" r="1.5"/><circle cx="543.32" cy="235.14" r="1.5"/><circle cx="547.31" cy="235.13" r="1.5"/><circle cx="551.30" cy="235.12" r="1.5"/><circle cx="555.29" cy="235.11" r="1.5"/><circle cx="559.28" cy="235.11" r="1.5"/><circle cx="563.27" cy="235.10" r="1.5"/><circle cx="567.26" cy="235.09" r="1.5"/><circle cx="571.25" cy="235.08" r="1.5"/><circle cx="575.24" cy="235.07" r="1.5"/><circle cx="579.23" cy="235.06" r="1.5"/><circle cx="583.22" cy="235.05" r="1.5"/><circle cx="587.21" cy="235.04" r="1.5"/><circle cx="591.20" cy="235.03" r="1.5"/><circle cx="595.19" cy="235.02" r="1.5"/><circle cx="599.18" cy="235.01" r="1.5"/><circle cx="603.17" cy="235.01" r="1.5"/><circle cx="607.16" cy="235.00" r="1.5"/><circle cx="611.15" cy="234.99" r="1.5"/><circle cx="615.14" cy="234.98" r="1.5"/><circle cx="619.13" cy="234.97" r="1.5"/><circle cx="623.12" cy="234.96" r="1.5"/><circle cx="627.11" cy="234.95" r="1.5"/><circle cx="631.10" cy="234.94" r="1.5"/><circle cx="635.09" cy="234.93" r="1.5"/><circle cx="639.08" cy="234.92" r="1.5"/><circle cx="643.07" cy="234.92" r="1.5"/><circle cx="647.06" cy="234.91" r="1.5"/><circle cx="651.05" cy="234.90" r="1.5"/><circle cx="655.04" cy="234.89" r="1.5"/><circle cx="659.03" cy="234.88" r="1.5"/><circle cx="663.02" cy="234.87" r="1.5"/><circle cx="667.01" cy="234.86" r="1.5"/><circle cx="671.00" cy="234.85" r="1.5"/><circle cx="674.99" cy="234.84" r="1.5"/><circle cx="678.98" cy="234.83" r="1.5"/><circle cx="682.97" cy="234.82" r="1.5"/><circle cx="686.96" cy="234.82" r="1.5"/><circle cx="690.95" cy="234.81" r="1.5"/><circle cx="694.94" cy="234.80" r="1.5"/><circle cx="698.93" cy="234.79" r="1.5"/><circle cx="702.92" cy="234.78" r="1.5"/><circle cx="706.91" cy="234.77" r="1.5"/><circle cx="710.90" cy="234.76" r="1.5"/><circle cx="714.89" cy="234.75" r="1.5"/><circle cx="718.88" cy="234.74" r="1.5"/><circle cx="722.87" cy="234.73" r="1.5"/><circle cx="726.86" cy="234.73" r="1.5"/><circle cx="730.85" cy="234.72" r="1.5"/><circle cx="734.84" cy="234.71" r="1.5"/><circle cx="738.83" cy="234.70" r="1.5"/><circle cx="742.82" cy="234.69" r="1.5"/><circle cx="746.81" cy="234.68" r="1.5"/><circle cx="750.80" cy="234.67" r="1.5"/><circle cx="754.79" cy="234.66" r="1.5"/><circle cx="758.78" cy="234.65" r="1.5"/><circle cx="762.77" cy="234.64" r="1.5"/><circle cx="766.76" cy="234.64" r="1.5"/><circle cx="770.75" cy="234.63" r="1.5"/><circle cx="774.74" cy="234.62" r="1.5"/><circle cx="778.73" cy="234.61" r="1.5"/><circle cx="782.72" cy="234.60" r="1.5"/><circle cx="786.71" cy="234.59" r="1.5"/><circle cx="790.70" cy="234.58" r="1.5"/><circle cx="794.69" cy="234.57" r="1.5"/><circle cx="798.68" cy="234.56" r="1.5"/><circle cx="802.67" cy="234.55" r="1.5"/><circle cx="806.66" cy="234.54" r="1.5"/><circle cx="810.65" cy="234.54" r="1.5"/><circle cx="814.64" cy="234.53" r="1.5"/><circle cx="818.63" cy="234.52" r="1.5"/><circle cx="822.62" cy="234.51" r="1.5"/><circle cx="826.61" cy="234.50" r="1.5"/><circle cx="830.60" cy="234.49" r="1.5"/><circle cx="834.59" cy="234.48" r="1.5"/><circle cx="838.58" cy="234.47" r="1.5"/><circle cx="842.57" cy="234.46" r="1.5"/><circle cx="846.56" cy="234.45" r="1.5"/><circle cx="850.55" cy="234.45" r="1.5"/><circle cx="854.54" cy="234.44" r="1.5"/><circle cx="858.53" cy="234.43" r="1.5"/><circle cx="862.52" cy="234.42" r="1.5"/><circle cx="866.51" cy="234.41" r="1.5"/><circle cx="870.50" cy="234.40" r="1.5"/></g>

<g stroke="#A2142F" stroke-width="1.3" fill="none"><path d="M467.20 235.30H475.80M471.50 231.00V239.60M468.46 232.26L474.54 238.34M468.46 238.34L474.54 232.26"/></g>

<g stroke="#A2142F" stroke-width="1.3" fill="none"><path d="M866.20 234.40H874.80M870.50 230.10V238.70M867.46 231.36L873.54 237.44M867.46 237.44L873.54 231.36"/></g>

<g font-family="Liberation Sans, Arial, sans-serif" font-size="12" fill="#262626">
<text x="69" y="124" text-anchor="end">500</text>
<text x="69" y="231" text-anchor="end">0</text>
<text x="69" y="338" text-anchor="end">-500</text>
<text x="69" y="446" text-anchor="end">-1000</text>
<text x="69" y="553" text-anchor="end">-1500</text>
<text x="69" y="660" text-anchor="end">-2000</text>
<text x="69" y="767" text-anchor="end">-2500</text>
<text x="73.3" y="778.3" text-anchor="middle">0</text>
<text x="153.1" y="778.3" text-anchor="middle">20</text>
<text x="232.9" y="778.3" text-anchor="middle">40</text>
<text x="312.7" y="778.3" text-anchor="middle">60</text>
<text x="392.5" y="778.3" text-anchor="middle">80</text>
<text x="472.3" y="778.3" text-anchor="middle">100</text>
<text x="552.1" y="778.3" text-anchor="middle">120</text>
<text x="631.9" y="778.3" text-anchor="middle">140</text>
<text x="711.7" y="778.3" text-anchor="middle">160</text>
<text x="791.5" y="778.3" text-anchor="middle">180</text>
<text x="871.3" y="778.3" text-anchor="middle">200</text>
</g>
<g font-family="Liberation Sans, Arial, sans-serif" font-size="13.2" fill="#262626">
<text x="474" y="792.7" text-anchor="middle">Episode Number</text>
<text transform="translate(32.3 446) rotate(-90)" text-anchor="middle">Episode Reward</text>
<text x="474" y="113.6" text-anchor="middle" font-weight="bold">Episode reward for DoubleIntegratorDiscreteAction with rlPPOAgent</text>
</g>
</svg>

<div class="abs status" style="left:1px;width:899px"></div>
<div class="abs status" style="left:901px;width:300px"></div>
<svg class="abs" style="left:1185px;top:821px" width="12" height="14" viewBox="0 0 12 14"><path d="M1 1.2L7.6 7L1 12.8Z" fill="#8d8d8d"/><rect x="8" y="1" width="2" height="12" fill="#8d8d8d"/></svg>

<!-- progress -->
<div class="abs" style="left:911px;top:97px;width:160px;height:15px;background:#fff"></div>
<div class="abs" style="left:911px;top:97px;width:6px;height:15px;background:#268cdd"></div>
<div class="btn" style="left:1081px;top:92px;width:110px;height:25px;border-color:#c6c6c6;color:#a3a3a3;line-height:22px;font-size:12px">Training stopped</div>

<div class="t" style="left:911px;top:128px">Episode number:</div>
<div class="t" style="left:1041px;top:128px">200/5000</div>
<div class="t" style="left:911px;top:153px">Start time:</div>
<div class="t" style="left:1041px;top:153px">13-Oct-2024 18:14:25</div>
<div class="t" style="left:911px;top:178px">Duration:</div>
<div class="t" style="left:1041px;top:178px">00:01:18</div>
<div class="t" style="left:911px;top:203px">Final result:</div>
<div class="abs" style="left:1041px;top:202.6px;width:150px;line-height:14.8px;white-space:normal">Training finished after all agents reached stop training criteria.</div>

<!-- Training Information panel -->
<div class="panel" style="top:258px;height:295px"><div class="ph"></div></div>
<div class="t b" style="left:915.5px;top:261px;letter-spacing:-0.045px">Training Information</div>
<div class="abs" style="left:922px;top:289px;width:258px;height:95px;border:1px solid #7d7d7d;background:#fff"></div>
<div class="abs" style="left:923px;top:290px;width:256px;height:27px;background:#f5f5f5;border-bottom:1px solid #7d7d7d"></div>
<div class="abs" style="left:923px;top:317px;width:256px;height:23px;background:#268cdd;border-bottom:1px solid #8a8a8a"></div>
<div class="abs" style="left:1051px;top:290px;width:1px;height:50px;background:#7d7d7d"></div>
<div class="t b" style="left:926px;top:297px;letter-spacing:-0.05px">Agent</div>
<div class="t b" style="left:1054.5px;top:297px;letter-spacing:-0.15px">Status</div>
<div class="t" style="left:926px;top:320px;color:#fff;letter-spacing:0.07px">rlPPOAgent</div>
<div class="t" style="left:1055px;top:320px;color:#fff;letter-spacing:0.03px">Training finished</div>

<div class="t b" style="left:922.4px;top:394.5px">Episode Information (rlPPOAgent):</div>
<div class="t" style="left:922.4px;top:419.5px">Episode reward:</div>
<div class="t" style="left:1042.5px;top:419.5px">-34.5416</div>
<div class="t" style="left:922.4px;top:444.8px">Average reward:</div>
<div class="t" style="left:1042.5px;top:444.8px">-35.0293</div>
<div class="t" style="left:922.4px;top:470px">Episode Q0:</div>
<div class="t" style="left:1042.5px;top:470px">-32.9324</div>
<div class="t" style="left:922.4px;top:494.5px">Evaluation statistic:</div>
<div class="t" style="left:1042.5px;top:494.5px">-34.2352</div>
<div class="btn" style="left:1070px;top:519px;width:110px;height:23px;line-height:21px">More Details...</div>

<!-- Plot Options panel -->
<div class="panel" style="top:563px;height:118px"><div class="ph"></div></div>
<div class="t b" style="left:915.5px;top:566px">Plot Options</div>
<div class="cb" style="top:595px"></div>
<svg class="abs" style="left:922px;top:595px" width="14" height="14" viewBox="0 0 14 14"><path d="M2.6 7L5.7 10.1L11.5 3.2" fill="none" stroke="#111" stroke-width="2.1"/></svg>
<div class="t" style="left:938.8px;top:595px">Show EpisodeQ0</div>
<div class="cb" style="top:622px"></div>
<svg class="abs" style="left:922px;top:622px" width="14" height="14" viewBox="0 0 14 14"><path d="M2.6 7L5.7 10.1L11.5 3.2" fill="none" stroke="#111" stroke-width="2.1"/></svg>
<div class="t" style="left:938.8px;top:622px">Show evaluation statistic</div>
<div class="cb" style="top:652px"></div>
<div class="t" style="left:938.8px;top:651px">Show last N episodes</div>
<div class="abs" style="left:1066px;top:647px;width:114px;height:23px;border:1px solid #d0d0d0;background:#f5f5f5;color:#a3a3a3;text-align:right;padding-right:4px;line-height:22px">5000</div>

<!-- legend -->
<div class="abs" style="left:911px;top:691px;width:280px;height:102px;border:1px solid #828282"></div>
<div class="abs" style="left:917px;top:697px;width:268px;height:90px;background:#fff"></div>
<svg class="abs" style="left:917px;top:697px" width="268" height="90" viewBox="917 697 268 90" font-family="Liberation Sans, Arial, sans-serif" font-size="10.75" fill="#1a1a1a">
  <path d="M973.4 704.5H1013.6" stroke="#4DBEEE" stroke-width="1"/><circle cx="993.5" cy="704.5" r="1.4" fill="#4DBEEE"/>
  <text x="1017.3" y="708.2">Episode reward</text>
  <path d="M973.4 723.5H1013.6" stroke="#0072BD" stroke-width="1"/><circle cx="993.5" cy="723.5" r="1.4" fill="#0072BD"/>
  <text x="1017.3" y="727.1">Average reward</text>
  <path d="M973.4 742.5H1013.6" stroke="#EDB120" stroke-width="1"/><circle cx="993.5" cy="742.5" r="1.4" fill="#EDB120"/>
  <text x="1017.3" y="746.2">Episode Q0</text>
  <g stroke="#A2142F" stroke-width="0.85" fill="none"><path d="M988.5 770.6H998.5M993.5 765.6V775.6M989.96 767.06L997.04 774.14M989.96 774.14L997.04 767.06"/></g>
  <text x="1017.3" y="768.8">Evaluation statistic</text>
  <text x="1017.3" y="781.1">(MeanEpisodeReward)</text>
</svg>

<div id="vsep" class="abs"></div>
<div id="lborder" class="abs"></div>
<div id="rborder" class="abs"></div>
<div id="bborder" class="abs"></div>
</div>
</body>
</html>
